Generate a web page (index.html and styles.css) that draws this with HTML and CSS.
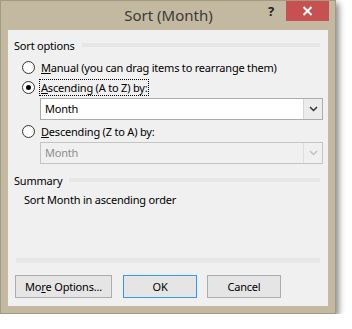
FILE: index.html
```html
<!DOCTYPE html>
<html>
<head>
<meta charset="utf-8">
<link rel="stylesheet" href="styles.css">
</head>
<body>
<div class="window">
  <div class="titlebar">
    <span></span>
    <span class="title">Sort (Month)</span>
    <span class="controls">
      <span class="help">?</span>
      <span class="close"><svg width="11" height="10" viewBox="0 0 11 10"><path d="M1.5 1 L9.5 9 M9.5 1 L1.5 9" stroke="#fff" stroke-width="2" fill="none"/></svg></span>
    </span>
  </div>
  <div class="content">
    <div class="group-head"><span>Sort options</span><i class="rule"></i></div>
    <div class="radio-row"><span class="radio"></span><span class="label"><u>M</u>anual (you can drag items to rearrange them)</span></div>
    <div class="radio-row"><span class="radio checked"></span><span class="label focus"><u>A</u>scending (A to Z) by:</span></div>
    <div class="select"><span class="value">Month</span><span class="arrow"><svg width="9" height="6" viewBox="0 0 9 6"><path d="M1 1 L4.5 4.5 L8 1" stroke="#333" stroke-width="1.5" fill="none"/></svg></span></div>
    <div class="radio-row"><span class="radio"></span><span class="label"><u>D</u>escending (Z to A) by:</span></div>
    <div class="select disabled"><span class="value">Month</span><span class="arrow"><svg width="9" height="6" viewBox="0 0 9 6"><path d="M1 1 L4.5 4.5 L8 1" stroke="#c2c2c2" stroke-width="1.5" fill="none"/></svg></span></div>
    <div class="group-head summary-head"><span>Summary</span><i class="rule"></i></div>
    <div class="summary">Sort Month in ascending order</div>
    <div class="spacer"></div>
    <div class="separator"></div>
    <div class="buttons">
      <span class="btn more">Mo<u>r</u>e Options...</span>
      <span class="btn ok">OK</span>
      <span class="btn cancel">Cancel</span>
    </div>
  </div>
</div>
</body>
</html>
```
FILE: styles.css
```css
html, body {
  margin: 0;
  padding: 0;
  background: #fff;
}
body {
  font-family: "Noto Sans", "Open Sans", sans-serif;
  font-size: 11px;
  letter-spacing: -0.2px;
  color: #000;
}
.window {
  box-sizing: border-box;
  width: 336px;
  height: 314px;
  background: #c3b9a0;
  border: 1px solid #a39a82;
  display: flex;
  flex-direction: column;
  box-shadow: 3px 3px 6px rgba(0, 0, 0, 0.45);
}
.titlebar {
  height: 29px;
  display: grid;
  grid-template-columns: 1fr auto 1fr;
  align-items: start;
}
.title {
  font-size: 15px;
  letter-spacing: 0;
  color: #3a3a3a;
  line-height: 29px;
  padding-left: 1px;
}
.controls {
  display: flex;
  justify-content: flex-end;
  align-items: flex-start;
}
.help {
  font-weight: bold;
  font-size: 13px;
  color: #222;
  line-height: 20px;
  margin-right: 12px;
}
.close {
  width: 43px;
  height: 20px;
  background: #c75050;
  margin-right: 6px;
  display: flex;
  align-items: center;
  justify-content: center;
}
.content {
  flex: 1;
  margin: 0 7px 7px 7px;
  background: #f0f0f0;
  padding: 7px 5px 8px 6px;
  display: flex;
  flex-direction: column;
}
.group-head {
  display: flex;
  align-items: center;
  height: 16px;
}
.group-head .rule {
  flex: 1;
  height: 4px;
  background: #e6e6e6;
  margin-left: 7px;
  margin-right: 3px;
}
.radio-row {
  display: flex;
  align-items: center;
  height: 20px;
}
.group-head + .radio-row {
  margin-top: 4px;
}
.radio {
  box-sizing: border-box;
  width: 13px;
  height: 13px;
  border-radius: 50%;
  border: 1px solid #333;
  background: #fff;
  margin-left: 8px;
  margin-right: 5px;
  display: flex;
  align-items: center;
  justify-content: center;
}
.radio.checked::after {
  content: "";
  width: 5px;
  height: 5px;
  border-radius: 50%;
  background: #000;
}
.label {
  line-height: 15px;
  padding: 0 1px;
  margin-left: -1px;
  border: 1px dotted transparent;
}
.label.focus {
  border-color: #000;
}
.select {
  box-sizing: border-box;
  height: 22px;
  margin: 1px 0 0 26px;
  border: 1px solid #acacac;
  background: #fff;
  display: flex;
  align-items: stretch;
}
.select .value {
  flex: 1;
  padding-left: 4px;
  line-height: 20px;
}
.select .arrow {
  width: 18px;
  background: #ececec;
  border-left: 1px solid #d6d6d6;
  display: flex;
  align-items: center;
  justify-content: center;
}
.select.disabled {
  background: #f0f0f0;
  border-color: #c4c4c4;
}
.select.disabled .value {
  color: #8d8d8d;
}
.select.disabled .arrow {
  background: #f0f0f0;
  border-left-color: #dedede;
}
.select + .radio-row {
  margin-top: 1px;
}
.summary-head {
  margin-top: 8px;
}
.summary {
  margin-top: 4px;
  margin-left: 10px;
  line-height: 16px;
}
.spacer {
  flex: 1;
}
.separator {
  height: 5px;
  background: #e6e6e6;
  margin: 0 3px 0 2px;
}
.buttons {
  display: flex;
  margin-top: 12px;
  margin-left: 1px;
}
.btn {
  box-sizing: border-box;
  height: 23px;
  border: 1px solid #adadad;
  background: #e5e5e5;
  display: flex;
  align-items: center;
  justify-content: center;
}
.btn.more {
  width: 97px;
}
.btn.ok {
  width: 74px;
  margin-left: 11px;
  border-color: #3399ff;
}
.btn.cancel {
  width: 74px;
  margin-left: 10px;
}
```
